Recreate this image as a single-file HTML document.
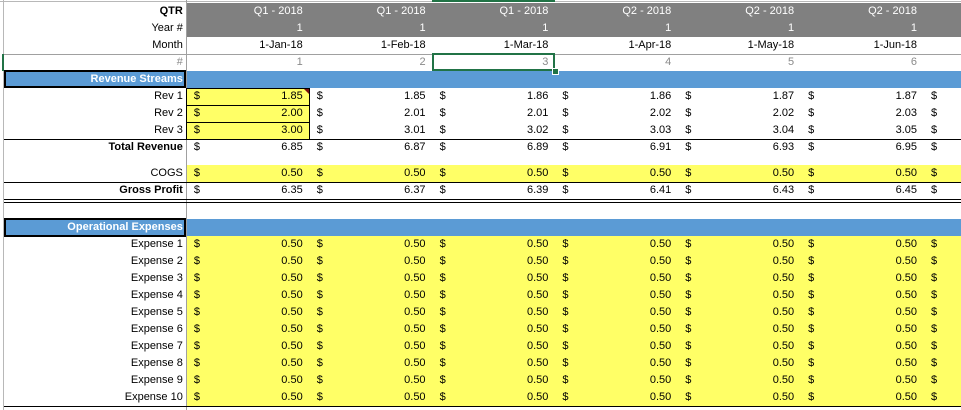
<!DOCTYPE html>
<html><head><meta charset="utf-8"><style>
html,body{margin:0;padding:0;background:#fff;width:961px;height:410px;overflow:hidden}
body{font-family:"Liberation Sans",Arial,sans-serif;font-size:11px;color:#000;position:relative}
table{position:absolute;left:0;top:3px;border-collapse:collapse;table-layout:fixed;border-spacing:0}
td{padding:0 6px 0 0;border:none;white-space:nowrap;overflow:hidden;text-align:right;height:17px;line-height:17px;box-sizing:border-box}
td.s{padding:0;background:#fff}
td.l{padding-right:3px}
td i{font-style:normal;float:left;padding-left:8px}
tr.g td{background:#808080;color:#fff}
tr.g td.l,tr.g td.s{background:#fff;color:#000}
tr.b td{background:#5b9bd5}
tr.b td.s{background:#fff}
tr.b td.l{color:#fff;font-weight:bold}
tr.y td{background:#ffff66}
tr.y td.l,tr.y td.s{background:#fff}
td.yy{background:#ffff66}
tr.n td{color:#8a8a8a}
.bold{font-weight:bold}
.h{position:absolute;height:1px;background:#000}
</style></head><body>
<table>
<colgroup><col style="width:4px"><col style="width:182px"><col style="width:123px"><col style="width:123px"><col style="width:123px"><col style="width:123px"><col style="width:123px"><col style="width:123px"><col style="width:38px"></colgroup>
<tr class="g"><td class="s"></td><td class="l bold">QTR</td><td>Q1 - 2018</td><td>Q1 - 2018</td><td>Q1 - 2018</td><td>Q2 - 2018</td><td>Q2 - 2018</td><td>Q2 - 2018</td><td></td></tr>
<tr class="g"><td class="s"></td><td class="l">Year #</td><td>1</td><td>1</td><td>1</td><td>1</td><td>1</td><td>1</td><td></td></tr>
<tr><td class="s"></td><td class="l">Month</td><td>1-Jan-18</td><td>1-Feb-18</td><td>1-Mar-18</td><td>1-Apr-18</td><td>1-May-18</td><td>1-Jun-18</td><td></td></tr>
<tr class="n"><td class="s"></td><td class="l">#</td><td>1</td><td>2</td><td>3</td><td>4</td><td>5</td><td>6</td><td></td></tr>
<tr class="b"><td class="s"></td><td class="l">Revenue Streams</td><td></td><td></td><td></td><td></td><td></td><td></td><td></td></tr>
<tr><td class="s"></td><td class="l">Rev 1</td><td class="yy"><i>$</i>1.85</td><td><i>$</i>1.85</td><td><i>$</i>1.86</td><td><i>$</i>1.86</td><td><i>$</i>1.87</td><td><i>$</i>1.87</td><td><i>$</i></td></tr>
<tr><td class="s"></td><td class="l">Rev 2</td><td class="yy"><i>$</i>2.00</td><td><i>$</i>2.01</td><td><i>$</i>2.01</td><td><i>$</i>2.02</td><td><i>$</i>2.02</td><td><i>$</i>2.03</td><td><i>$</i></td></tr>
<tr><td class="s"></td><td class="l">Rev 3</td><td class="yy"><i>$</i>3.00</td><td><i>$</i>3.01</td><td><i>$</i>3.02</td><td><i>$</i>3.03</td><td><i>$</i>3.04</td><td><i>$</i>3.05</td><td><i>$</i></td></tr>
<tr><td class="s"></td><td class="l bold">Total Revenue</td><td><i>$</i>6.85</td><td><i>$</i>6.87</td><td><i>$</i>6.89</td><td><i>$</i>6.91</td><td><i>$</i>6.93</td><td><i>$</i>6.95</td><td><i>$</i></td></tr>
<tr><td class="s" style="height:9px"></td><td style="height:9px"></td><td colspan="7" style="height:9px"></td></tr>
<tr class="y"><td class="s"></td><td class="l">COGS</td><td><i>$</i>0.50</td><td><i>$</i>0.50</td><td><i>$</i>0.50</td><td><i>$</i>0.50</td><td><i>$</i>0.50</td><td><i>$</i>0.50</td><td><i>$</i></td></tr>
<tr><td class="s"></td><td class="l bold">Gross Profit</td><td><i>$</i>6.35</td><td><i>$</i>6.37</td><td><i>$</i>6.39</td><td><i>$</i>6.41</td><td><i>$</i>6.43</td><td><i>$</i>6.45</td><td><i>$</i></td></tr>
<tr><td class="s" style="height:20px"></td><td style="height:20px"></td><td colspan="7" style="height:20px"></td></tr>
<tr class="b"><td class="s"></td><td class="l">Operational Expenses</td><td></td><td></td><td></td><td></td><td></td><td></td><td></td></tr>
<tr class="y"><td class="s"></td><td class="l">Expense 1</td><td><i>$</i>0.50</td><td><i>$</i>0.50</td><td><i>$</i>0.50</td><td><i>$</i>0.50</td><td><i>$</i>0.50</td><td><i>$</i>0.50</td><td><i>$</i></td></tr>
<tr class="y"><td class="s"></td><td class="l">Expense 2</td><td><i>$</i>0.50</td><td><i>$</i>0.50</td><td><i>$</i>0.50</td><td><i>$</i>0.50</td><td><i>$</i>0.50</td><td><i>$</i>0.50</td><td><i>$</i></td></tr>
<tr class="y"><td class="s"></td><td class="l">Expense 3</td><td><i>$</i>0.50</td><td><i>$</i>0.50</td><td><i>$</i>0.50</td><td><i>$</i>0.50</td><td><i>$</i>0.50</td><td><i>$</i>0.50</td><td><i>$</i></td></tr>
<tr class="y"><td class="s"></td><td class="l">Expense 4</td><td><i>$</i>0.50</td><td><i>$</i>0.50</td><td><i>$</i>0.50</td><td><i>$</i>0.50</td><td><i>$</i>0.50</td><td><i>$</i>0.50</td><td><i>$</i></td></tr>
<tr class="y"><td class="s"></td><td class="l">Expense 5</td><td><i>$</i>0.50</td><td><i>$</i>0.50</td><td><i>$</i>0.50</td><td><i>$</i>0.50</td><td><i>$</i>0.50</td><td><i>$</i>0.50</td><td><i>$</i></td></tr>
<tr class="y"><td class="s"></td><td class="l">Expense 6</td><td><i>$</i>0.50</td><td><i>$</i>0.50</td><td><i>$</i>0.50</td><td><i>$</i>0.50</td><td><i>$</i>0.50</td><td><i>$</i>0.50</td><td><i>$</i></td></tr>
<tr class="y"><td class="s"></td><td class="l">Expense 7</td><td><i>$</i>0.50</td><td><i>$</i>0.50</td><td><i>$</i>0.50</td><td><i>$</i>0.50</td><td><i>$</i>0.50</td><td><i>$</i>0.50</td><td><i>$</i></td></tr>
<tr class="y"><td class="s"></td><td class="l">Expense 8</td><td><i>$</i>0.50</td><td><i>$</i>0.50</td><td><i>$</i>0.50</td><td><i>$</i>0.50</td><td><i>$</i>0.50</td><td><i>$</i>0.50</td><td><i>$</i></td></tr>
<tr class="y"><td class="s"></td><td class="l">Expense 9</td><td><i>$</i>0.50</td><td><i>$</i>0.50</td><td><i>$</i>0.50</td><td><i>$</i>0.50</td><td><i>$</i>0.50</td><td><i>$</i>0.50</td><td><i>$</i></td></tr>
<tr class="y"><td class="s"></td><td class="l">Expense 10</td><td><i>$</i>0.50</td><td><i>$</i>0.50</td><td><i>$</i>0.50</td><td><i>$</i>0.50</td><td><i>$</i>0.50</td><td><i>$</i>0.50</td><td><i>$</i></td></tr>
</table>
<!-- lines -->
<div style="position:absolute;left:0;top:1px;width:961px;height:1px;background:#b8b8b8"></div>
<div style="position:absolute;left:432px;top:0;width:123px;height:2px;background:#217346"></div>
<div style="position:absolute;left:3px;top:0;width:1px;height:410px;background:#b8b8b8"></div>
<div style="position:absolute;left:186px;top:0;width:1px;height:410px;background:#a0a0a0"></div>
<div style="position:absolute;left:4px;top:54px;width:957px;height:1px;background:#a0a0a0"></div>
<div style="position:absolute;left:2px;top:54px;width:2px;height:17px;background:#217346"></div>
<div style="position:absolute;left:4px;top:70px;width:178px;height:14px;border:2px solid #000"></div>
<div style="position:absolute;left:186px;top:88px;width:122px;height:50px;border:1px solid #000"></div>
<div class="h" style="left:186px;top:105px;width:123px"></div>
<div class="h" style="left:186px;top:122px;width:123px"></div>
<div class="h" style="left:4px;top:139px;width:957px"></div>
<div class="h" style="left:4px;top:182px;width:957px"></div>
<div class="h" style="left:4px;top:199px;width:957px"></div>
<div class="h" style="left:4px;top:202px;width:957px"></div>
<div style="position:absolute;left:4px;top:218px;width:178px;height:15px;border:2px solid #000"></div>
<div class="h" style="left:4px;top:406px;width:957px"></div>
<div style="position:absolute;left:432px;top:53px;width:119px;height:14px;border:2px solid #217346"></div>
<div style="position:absolute;left:552px;top:68px;width:5px;height:5px;background:#217346;border:1px solid #fff"></div>
<div style="position:absolute;left:304px;top:89px;width:0;height:0;border-top:5px solid #7a1010;border-left:5px solid transparent"></div>
</body></html>
